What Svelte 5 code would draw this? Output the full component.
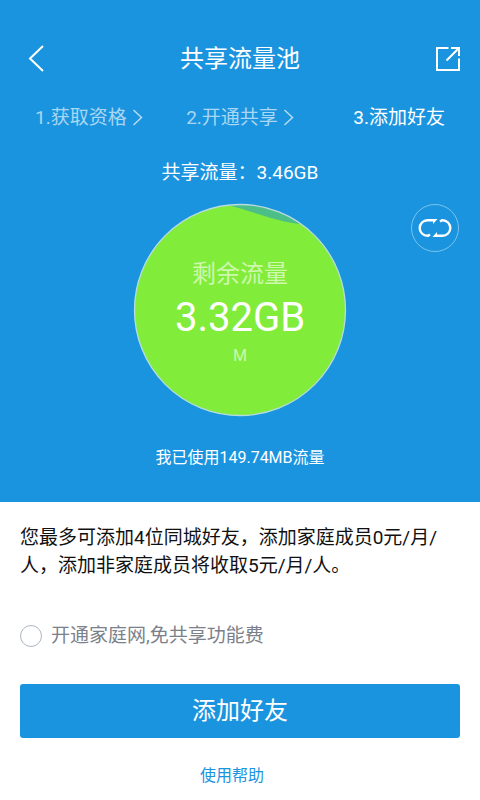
<script>
  let familyNet = $state(false);
  const steps = [
    { label: '1.获取资格', current: false },
    { label: '2.开通共享', current: false },
    { label: '3.添加好友', current: true }
  ];
</script>

<main>
  <section class="hero">
    <header>
      <button class="icon" aria-label="返回">
        <svg width="16" height="28" viewBox="0 0 16 28"><path d="M15 1 2 13.500 15 26" /></svg>
      </button>
      <h1>共享流量池</h1>
      <button class="icon share" aria-label="分享">
        <svg width="26" height="26" viewBox="0 0 26 26">
          <path d="M13.500 2H2v22h22V12.500" />
          <path d="M16 2h8v8M24 2 11.500 14.500" />
        </svg>
      </button>
    </header>

    <ol class="steps">
      {#each steps as step}
        <li class:current={step.current}>
          {step.label}
          {#if !step.current}
            <svg width="11" height="18" viewBox="0 0 11 18"><path d="M1.500 1 9.500 8.500l-8 7.500" /></svg>
          {/if}
        </li>
      {/each}
    </ol>

    <p class="total">共享流量：3.46GB</p>

    <div class="pool">
      <div class="gauge">
        <svg class="liquid" viewBox="0 0 212 212" aria-hidden="true">
          <circle cx="106" cy="106" r="105.500" fill="#82ec3b" />
          <path d="M94 1.200A105.500 105.500 0 0 1 168 20C142 18 119 7 94 1.200Z" fill="#4cbf89" />
          <circle cx="106" cy="106" r="105.500" fill="none" stroke="#b5dcdf" stroke-width="1.300" />
        </svg>
        <div class="reading">
          <span class="caption">剩余流量</span>
          <strong>3.32GB</strong>
          <span class="unit">M</span>
        </div>
      </div>
      <button class="refresh" aria-label="刷新">
        <svg width="34" height="20" viewBox="0 0 34 20">
          <path d="M16 2.200H9.500a7.800 7.800 0 0 0 0 15.600H10L12 16.500" />
          <path d="M18 17.800h6.500a7.800 7.800 0 0 0 0-15.600H24L22 3.500" />
          <path class="tip" d="M15 1h4.500l-4.500 5zM19 19h-4.500l4.500-5z" />
        </svg>
      </button>
    </div>

    <p class="used">我已使用149.74MB流量</p>
  </section>

  <section class="details">
    <p class="terms">您最多可添加4位同城好友，添加家庭成员0元/月/人，添加非家庭成员将收取5元/月/人。</p>
    <label>
      <input type="checkbox" bind:checked={familyNet} />
      开通家庭网,免共享功能费
    </label>
    <button class="add">添加好友</button>
    <a href="#help">使用帮助</a>
  </section>
</main>

<style>
  :global(body) {
    background: #fff;
  }
  main {
    font-family: Roboto, 'Noto Sans CJK SC', sans-serif;
    font-size: 19px;
    line-height: 28px;
    color: #111;
  }
  h1, p, ol {
    margin: 0;
    padding: 0;
    font-weight: 400;
  }
  button {
    font: inherit;
    color: inherit;
    background: none;
    border: 0;
    padding: 0;
    cursor: pointer;
  }
  svg {
    display: block;
    fill: none;
    stroke: #fff;
    stroke-width: 2;
  }
  .hero {
    background: #1b94df;
    color: #fff;
    text-align: center;
    padding: 41px 0 30px;
  }
  header {
    display: flex;
    align-items: center;
    justify-content: space-between;
    padding: 0 19px;
  }
  h1 {
    font-size: 24px;
    line-height: 36px;
  }
  .icon {
    display: flex;
    justify-content: center;
    width: 34px;
  }
  .share {
    justify-content: flex-end;
  }
  .steps {
    display: grid;
    grid-template-columns: auto 1fr auto;
    padding: 0 35px;
    margin-top: 27px;
    list-style: none;
  }
  .steps li {
    display: flex;
    align-items: center;
    justify-content: center;
    gap: 5px;
    color: #a9d7f3;
  }
  .steps li:nth-child(2) {
    padding-right: 16px;
  }
  .steps .current {
    color: #fff;
  }
  .steps svg {
    stroke: #b4dcf5;
    stroke-width: 1.500;
  }
  .total {
    margin-top: 27px;
  }
  .pool {
    position: relative;
    display: flex;
    justify-content: center;
    margin-top: 17px;
  }
  .gauge {
    display: grid;
    width: 212px;
    height: 212px;
  }
  .gauge > * {
    grid-area: 1 / 1;
  }
  .liquid {
    overflow: visible;
    stroke: none;
  }
  .reading {
    z-index: 1;
    display: flex;
    flex-direction: column;
    padding-top: 52px;
  }
  .caption {
    font-size: 24px;
    line-height: 36px;
    color: #cdf8ad;
  }
  strong {
    font-size: 40px;
    line-height: 52px;
    font-weight: 400;
  }
  .unit {
    font-size: 16px;
    line-height: 24px;
    color: #cdf8ad;
  }
  .refresh {
    position: absolute;
    top: 0;
    right: 21px;
    display: grid;
    place-items: center;
    width: 48px;
    height: 48px;
    border: 1px solid #79c2ee;
    border-radius: 50%;
  }
  .refresh svg {
    stroke-width: 2.400;
  }
  .refresh .tip {
    fill: #fff;
    stroke: none;
  }
  .used {
    font-size: 16px;
    margin-top: 28px;
  }
  .details {
    display: flex;
    flex-direction: column;
    padding: 22px 20px 10px;
  }
  label {
    display: flex;
    align-items: center;
    gap: 9px;
    margin-top: 42px;
    color: #7b818a;
  }
  input {
    appearance: none;
    box-sizing: border-box;
    width: 22px;
    height: 22px;
    margin: 0;
    border: 1px solid #adb5c2;
    border-radius: 50%;
  }
  input:checked {
    background: #1b94df;
  }
  .add {
    height: 54px;
    margin-top: 34px;
    border-radius: 3px;
    background: #1b94df;
    color: #fff;
    font-size: 24px;
  }
  a {
    align-self: center;
    margin: 24px 16px 0 0;
    font-size: 16px;
    color: #1b94df;
    text-decoration: none;
  }
</style>
